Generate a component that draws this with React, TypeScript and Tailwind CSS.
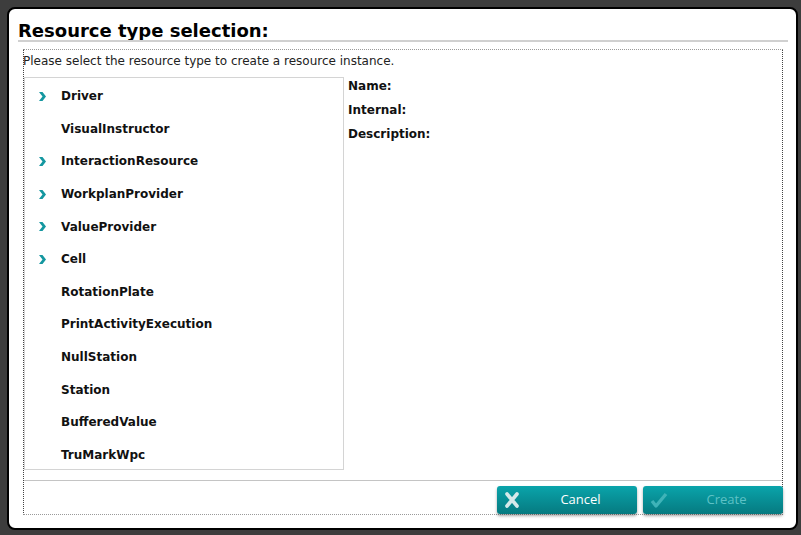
import React from 'react';

const items = [
  { name: 'Driver', children: true },
  { name: 'VisualInstructor', children: false },
  { name: 'InteractionResource', children: true },
  { name: 'WorkplanProvider', children: true },
  { name: 'ValueProvider', children: true },
  { name: 'Cell', children: true },
  { name: 'RotationPlate', children: false },
  { name: 'PrintActivityExecution', children: false },
  { name: 'NullStation', children: false },
  { name: 'Station', children: false },
  { name: 'BufferedValue', children: false },
  { name: 'TruMarkWpc', children: false },
];

const Chevron = () => (
  <svg width="7" height="9" viewBox="0 0 7 9" className="shrink-0">
    <polygon points="0,0 3.5,0 7,4.5 3.5,9 0,9 3.5,4.5" fill="#1497a0" />
  </svg>
);

const App: React.FC = () => {
  return (
    <div className="w-[801px] h-[535px] bg-[#3d3d3d] pt-[7px] pl-[7px] pr-[3px] pb-[5px] font-['DejaVu_Sans',Verdana,sans-serif]">
      <div className="h-full w-full bg-white border-2 border-black rounded-[8px] pl-[9px] pr-[8px] pt-[12px] flex flex-col">
        {/* Title */}
        <h1 className="text-[18px] leading-[20px] font-bold text-black">Resource type selection:</h1>
        <div className="h-[2px] bg-[#d0d0d0] mt-[-1px]" />

        {/* Content */}
        <div className="mt-[7px] ml-[5px] mr-[5px] h-[466px] border border-dotted border-t-[#9a9a9a] border-b-[#9a9a9a] border-l-[#444] border-r-[#444] flex flex-col">
          <p className="text-[12px] leading-[14px] text-[#222] mt-[4px] -ml-[1px]">
            Please select the resource type to create a resource instance.
          </p>

          <div className="flex mt-[9px]">
            {/* Type list */}
            <div className="w-[320px] h-[393px] border border-[#d4d4d4] pt-[2px]">
              {items.map((item) => (
                <div key={item.name} className="h-[32.6px] flex items-center">
                  <div className="w-[36px] flex justify-end pr-[15px]">
                    {item.children && <Chevron />}
                  </div>
                  <span className="text-[12px] font-bold text-[#111]">{item.name}</span>
                </div>
              ))}
            </div>

            {/* Details */}
            <div className="ml-[4px] mt-[1px] flex flex-col gap-[8px] text-[12px] leading-[16px] font-bold text-[#111]">
              <span>Name:</span>
              <span>Internal:</span>
              <span>Description:</span>
            </div>
          </div>

          <div className="h-[1px] bg-[#c4c4c4] mt-[10px]" />

          {/* Buttons */}
          <div className="flex justify-end gap-[6px] mt-[5px] -mr-[1px]">
            <button className="w-[140px] h-[28px] rounded-[3px] bg-gradient-to-b from-[#0aa4ab] to-[#067a80] shadow-[0_2px_3px_rgba(0,0,0,0.35)] flex items-center text-white text-[13px] font-['Open_Sans',sans-serif]">
              <svg width="16" height="16" viewBox="0 0 16 16" className="ml-[7px]">
                <path d="M3 2 L13 14 M13 2 L3 14" stroke="#d5e9ea" strokeWidth="3.6" strokeLinecap="round" />
              </svg>
              <span className="flex-1 text-center pl-[4px]">Cancel</span>
            </button>
            <button className="w-[140px] h-[28px] rounded-[3px] bg-gradient-to-b from-[#0aa4ab] to-[#067a80] shadow-[0_2px_3px_rgba(0,0,0,0.35)] flex items-center text-[#5ec2c6] text-[13px] font-['Open_Sans',sans-serif]">
              <svg width="18" height="16" viewBox="0 0 18 16" className="ml-[7px]">
                <path d="M2 9 L6 14 L16 2" stroke="#3fb3b8" strokeWidth="3.4" fill="none" strokeLinejoin="round" />
              </svg>
              <span className="flex-1 text-center pl-[2px]">Create</span>
            </button>
          </div>
        </div>
      </div>
    </div>
  );
};

export default App;
